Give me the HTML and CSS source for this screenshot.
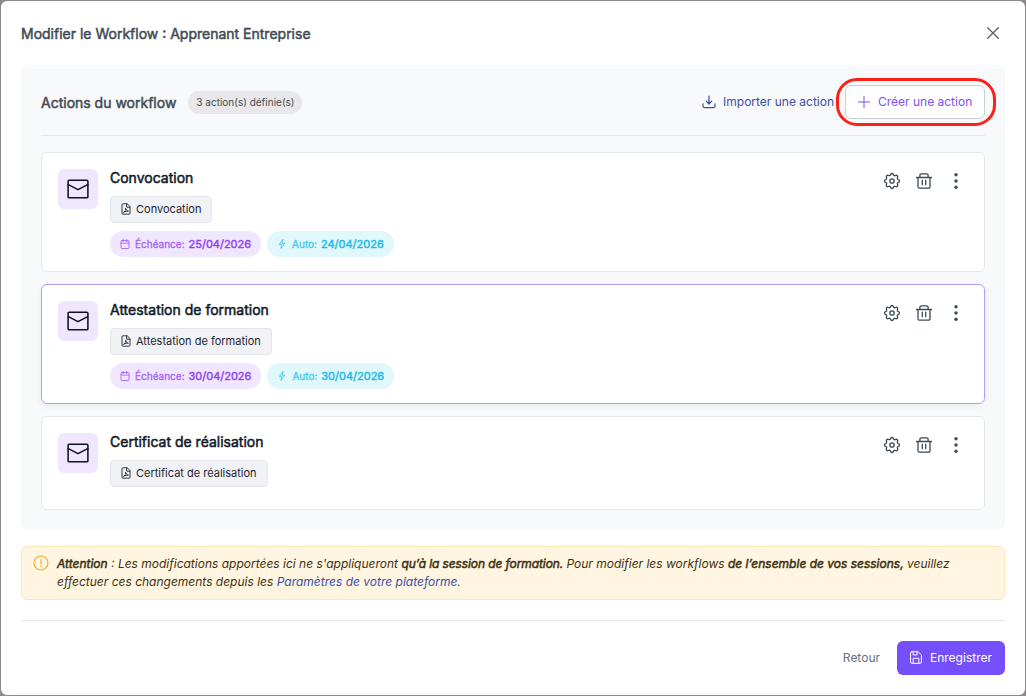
FILE: index.html
```html
<!DOCTYPE html>
<html lang="fr">
<head>
  <meta charset="UTF-8">
  <meta name="viewport" content="width=device-width, initial-scale=1.0">
  <title>Modifier le Workflow</title>
  <link rel="stylesheet" href="styles.css">
</head>
<body>
  <!-- Icon sprite -->
  <svg class="sprite">
    <symbol id="i-mail" viewBox="0 0 20 20"><rect x="1" y="2" width="18" height="16" rx="1"/><path d="M1.200 6 10 10.600l8.800-4.600"/></symbol>
    <symbol id="i-file" viewBox="0 0 12 12"><path d="M6.800.8H3A1 1 0 0 0 2 1.800v8.400a1 1 0 0 0 1 1h6a1 1 0 0 0 1-1V4zM6.600.8V4.200H10M3.800 9.200C5.200 8.400 5.800 7 5.700 5.200 6 7 6.800 7.900 8.400 8.200 6.800 7.900 5.200 8.300 3.800 9.200z"/></symbol>
    <symbol id="i-cal" viewBox="0 0 10 10"><rect x="1" y="1.500" width="8" height="8" rx=".8"/><path d="M1 4.100h8M3.200.3v2.400M6.800.3v2.400"/></symbol>
    <symbol id="i-bolt" viewBox="0 0 10 10"><path d="M5.900.6 2.200 5.600h2.300L4 9.500l3.800-5.200H5.400z"/></symbol>
    <symbol id="i-gear" viewBox="0 0 24 24"><path d="M10.325 4.317c.426-1.756 2.924-1.756 3.350 0a1.724 1.724 0 0 0 2.573 1.066c1.543-.94 3.310.826 2.370 2.370a1.724 1.724 0 0 0 1.065 2.572c1.756.426 1.756 2.924 0 3.350a1.724 1.724 0 0 0-1.066 2.573c.94 1.543-.826 3.310-2.370 2.370a1.724 1.724 0 0 0-2.572 1.065c-.426 1.756-2.924 1.756-3.350 0a1.724 1.724 0 0 0-2.573-1.066c-1.543.94-3.310-.826-2.370-2.370a1.724 1.724 0 0 0-1.065-2.572c-1.756-.426-1.756-2.924 0-3.350a1.724 1.724 0 0 0 1.066-2.573c-.94-1.543.826-3.310 2.370-2.370 1 .608 2.296.070 2.572-1.065z"/><circle cx="12" cy="12" r="2.600"/></symbol>
    <symbol id="i-trash" viewBox="0 0 16 16"><path d="M.5 4.500h15M2 4.500v9.200a1.500 1.500 0 0 0 1.500 1.500h9a1.500 1.500 0 0 0 1.500-1.500V4.500M3.900 4.300V2.300A1.500 1.500 0 0 1 5.400.8h5.200a1.500 1.500 0 0 1 1.500 1.500v2M6.300 7.200v4.600M9.700 7.200v4.600"/></symbol>
    <symbol id="i-dots" viewBox="0 0 16 16"><circle cx="8" cy="1.700" r="1.700"/><circle cx="8" cy="8" r="1.700"/><circle cx="8" cy="14.300" r="1.700"/></symbol>
    <symbol id="i-import" viewBox="0 0 14 14"><path d="M7 1.200v7.600M4.200 6.200 7 9l2.800-2.800M1 8.800v2.400a1.400 1.400 0 0 0 1.400 1.400h9.200A1.400 1.400 0 0 0 13 11.200V8.800"/></symbol>
    <symbol id="i-plus" viewBox="0 0 12 12"><path d="M6 .3v11.400M.3 6h11.400"/></symbol>
    <symbol id="i-close" viewBox="0 0 12 12"><path d="M.7.7l10.600 10.600M11.300.7.7 11.300"/></symbol>
    <symbol id="i-warn" viewBox="0 0 16 16"><circle cx="8" cy="8" r="7"/><path d="M8 4.400v4.300M8 10.600v1"/></symbol>
    <symbol id="i-save" viewBox="0 0 12 13"><path d="M2 .7h6l3.400 3.200v7.200a1.200 1.200 0 0 1-1.200 1.200H1.800A1.200 1.200 0 0 1 .6 11.100V2A1.300 1.300 0 0 1 2 .7zM3.200.9v3h3.900v-3M3.200 12.200V7.300h5.600v4.900"/></symbol>
  </svg>

  <div class="modal">
    <header class="modal-header">
      <h2 class="modal-title">Modifier le Workflow : Apprenant Entreprise</h2>
      <svg class="close"><use href="#i-close"/></svg>
    </header>

    <section class="panel">
      <div class="panel-head">
        <h3 class="panel-title">Actions du workflow</h3>
        <span class="count">3 action(s) définie(s)</span>
        <a class="import"><svg><use href="#i-import"/></svg><span>Importer une action</span></a>
        <button class="create"><svg><use href="#i-plus"/></svg><span>Créer une action</span></button>
      </div>

      <div class="cards">
        <article class="card">
          <div class="card-icon"><svg><use href="#i-mail"/></svg></div>
          <div class="card-body">
            <h4 class="card-title">Convocation</h4>
            <span class="doc"><svg><use href="#i-file"/></svg><span>Convocation</span></span>
            <div class="pills">
              <span class="pill due"><svg><use href="#i-cal"/></svg><span>Échéance:</span><b>25/04/2026</b></span>
              <span class="pill auto"><svg><use href="#i-bolt"/></svg><span>Auto:</span><b>24/04/2026</b></span>
            </div>
          </div>
          <div class="tools">
            <svg class="gear"><use href="#i-gear"/></svg>
            <svg><use href="#i-trash"/></svg>
            <svg class="dots"><use href="#i-dots"/></svg>
          </div>
        </article>

        <article class="card active">
          <div class="card-icon"><svg><use href="#i-mail"/></svg></div>
          <div class="card-body">
            <h4 class="card-title">Attestation de formation</h4>
            <span class="doc"><svg><use href="#i-file"/></svg><span>Attestation de formation</span></span>
            <div class="pills">
              <span class="pill due"><svg><use href="#i-cal"/></svg><span>Échéance:</span><b>30/04/2026</b></span>
              <span class="pill auto"><svg><use href="#i-bolt"/></svg><span>Auto:</span><b>30/04/2026</b></span>
            </div>
          </div>
          <div class="tools">
            <svg class="gear"><use href="#i-gear"/></svg>
            <svg><use href="#i-trash"/></svg>
            <svg class="dots"><use href="#i-dots"/></svg>
          </div>
        </article>

        <article class="card">
          <div class="card-icon"><svg><use href="#i-mail"/></svg></div>
          <div class="card-body">
            <h4 class="card-title">Certificat de réalisation</h4>
            <span class="doc"><svg><use href="#i-file"/></svg><span>Certificat de réalisation</span></span>
          </div>
          <div class="tools">
            <svg class="gear"><use href="#i-gear"/></svg>
            <svg><use href="#i-trash"/></svg>
            <svg class="dots"><use href="#i-dots"/></svg>
          </div>
        </article>
      </div>
    </section>

    <div class="alert">
      <svg><use href="#i-warn"/></svg>
      <p><b>Attention</b> : Les modifications apportées ici ne s'appliqueront <b class="tight">qu’à la session de formation.</b> Pour modifier les workflows <b>de l’ensemble de vos sessions,</b> veuillez<br>effectuer ces changements depuis les <a>Paramètres de votre plateforme.</a></p>
    </div>

    <footer class="modal-footer">
      <button class="back">Retour</button>
      <button class="save"><svg><use href="#i-save"/></svg><span>Enregistrer</span></button>
    </footer>
  </div>
</body>
</html>
```
FILE: styles.css
```css
* {
  box-sizing: border-box;
}
body {
  margin: 0;
  padding: 1px;
  height: 696px;
  background: #8c8a8b;
  font-family: Inter, "Liberation Sans", sans-serif;
  font-size: 12px;
  overflow: hidden;
}
h2, h3, h4, p {
  margin: 0;
  font-weight: 400;
}
button {
  font: inherit;
  border: 0;
  background: none;
}
b {
  font-weight: 400;
}
svg {
  fill: none;
  stroke: currentColor;
  stroke-linecap: round;
  stroke-linejoin: round;
  flex-shrink: 0;
}
.sprite {
  display: none;
}
.modal {
  width: 1024px;
  height: 694px;
  padding: 0 20px;
  background: #fff;
  border-radius: 6px;
}
.modal-header {
  display: flex;
  justify-content: space-between;
  align-items: center;
  height: 64px;
  padding-right: 6px;
}
.modal-title {
  font-size: 14px;
  line-height: 20px;
  color: #424b55;
  -webkit-text-stroke: 0.5px;
  padding-top: 2px;
}
.close {
  width: 12px;
  height: 12px;
  color: #57606b;
  stroke-width: 1.3;
}

/* Actions panel */
.panel {
  height: 465px;
  padding: 20px;
  background: #f8f9fb;
  border-radius: 8px;
}
.panel-head {
  display: flex;
  align-items: center;
  height: 51px;
  padding-bottom: 16px;
  border-bottom: 1px solid #e5e7eb;
}
.panel-title {
  font-size: 14px;
  color: #424b55;
  -webkit-text-stroke: 0.5px;
}
.count {
  margin: 0 auto 0 12px;
  padding: 0 8px;
  line-height: 23px;
  font-size: 10px;
  color: #454b54;
  background: #e8e8eb;
  border-radius: 12px;
}
.import {
  display: flex;
  align-items: center;
  gap: 7px;
  color: #3b4fa6;
}
.import span,
.create span {
  padding-bottom: 2px;
}
.import svg {
  width: 14px;
  height: 14px;
  stroke-width: 1.2;
}
.create {
  position: relative;
  display: flex;
  align-items: center;
  gap: 8px;
  width: 140px;
  height: 34px;
  margin-left: 11px;
  padding: 0 12px;
  white-space: nowrap;
  color: #7a52f4;
  background: #fff;
  border: 1px solid #c8ced8;
  border-radius: 6px;
}
/* red highlight ring */
.create::after {
  content: "";
  position: absolute;
  inset: -8px -12px -8px -10px;
  border: 3px solid #fb2018;
  border-radius: 21px;
}
.create svg {
  width: 12px;
  height: 12px;
}
.cards {
  display: flex;
  flex-direction: column;
  gap: 12px;
  margin-top: 16px;
}
.card {
  display: flex;
  gap: 12px;
  min-height: 94px;
  padding: 16px 20px 14px 16px;
  background: #fff;
  border: 1px solid #e5e7eb;
  border-radius: 6px;
}
.card.active {
  border-color: #b39cf5;
  box-shadow: 0 2px 8px rgba(0, 0, 0, 0.06);
}
.card-icon {
  display: flex;
  align-items: center;
  justify-content: center;
  width: 40px;
  height: 40px;
  background: #f0e6ff;
  border-radius: 6px;
  color: #10131f;
}
.card-icon svg {
  width: 22px;
  height: 22px;
  stroke-width: 1.4;
}
.card-body {
  flex: 1;
}
.card-title {
  font-size: 14px;
  line-height: 17px;
  margin-bottom: 10px;
  color: #111827;
  -webkit-text-stroke: 0.5px;
}
.doc {
  display: flex;
  align-items: center;
  gap: 4px;
  width: fit-content;
  height: 27px;
  padding: 0 10px 1px 9px;
  font-size: 11px;
  color: #1f2430;
  background: #f1f2f6;
  border: 1px solid #e4e6ea;
  border-radius: 4px;
}
.doc svg {
  width: 12px;
  height: 12px;
  stroke-width: 0.9;
}
.pills {
  display: flex;
  gap: 6px;
  margin-top: 8px;
}
.pill {
  display: flex;
  align-items: center;
  height: 26px;
  padding: 0 10px;
  font-size: 11px;
  border-radius: 13px;
}
.pill svg {
  width: 10px;
  height: 10px;
  margin-right: 5px;
  stroke-width: 0.9;
}
.pill span {
  padding-bottom: 1px;
  font-size: 10px;
  -webkit-text-stroke: 0.3px;
}
.pill b {
  margin-left: 4px;
  -webkit-text-stroke: 0.45px;
}
.due {
  color: #a866f7;
  background: #f0e6ff;
}
.due b {
  color: #9147f0;
}
.auto {
  color: #45c9ec;
  background: #e0f7fc;
}
.auto b {
  color: #22bbe8;
}
.tools {
  display: flex;
  gap: 16px;
  padding-top: 4px;
  color: #3d4859;
}
.tools svg {
  width: 16px;
  height: 16px;
  stroke-width: 1.3;
}
.tools .gear {
  width: 20px;
  height: 20px;
  margin: -2px;
  stroke-width: 1.6;
}
.tools .dots {
  fill: currentColor;
  stroke: none;
}

/* Warning */
.alert {
  display: flex;
  gap: 8px;
  height: 54px;
  margin-top: 16px;
  padding: 8px 12px 8px 11px;
  line-height: 18px;
  font-style: italic;
  color: #40310f;
  background: #fff5e1;
  border: 1px solid #fde7b4;
  border-radius: 6px;
}
.alert svg {
  width: 16px;
  height: 16px;
  color: #f3a62f;
  stroke-width: 1.1;
}
.alert b {
  -webkit-text-stroke: 0.5px;
}
.alert .tight {
  letter-spacing: -0.1px;
}
.alert p {
  white-space: nowrap;
}
.alert a {
  color: #3b4fa6;
}

.modal-footer {
  display: flex;
  justify-content: flex-end;
  gap: 16px;
  margin-top: 20px;
  padding-top: 20px;
  border-top: 1px solid #e5e7eb;
}
.back {
  padding: 0 1px 1px 0;
  color: #66707f;
}
.save {
  display: flex;
  align-items: center;
  gap: 8px;
  width: 108px;
  height: 34px;
  padding: 0 13px 1px;
  color: #fff;
  background: #744ffb;
  border-radius: 6px;
}
.save svg {
  width: 12px;
  height: 13px;
}
```
